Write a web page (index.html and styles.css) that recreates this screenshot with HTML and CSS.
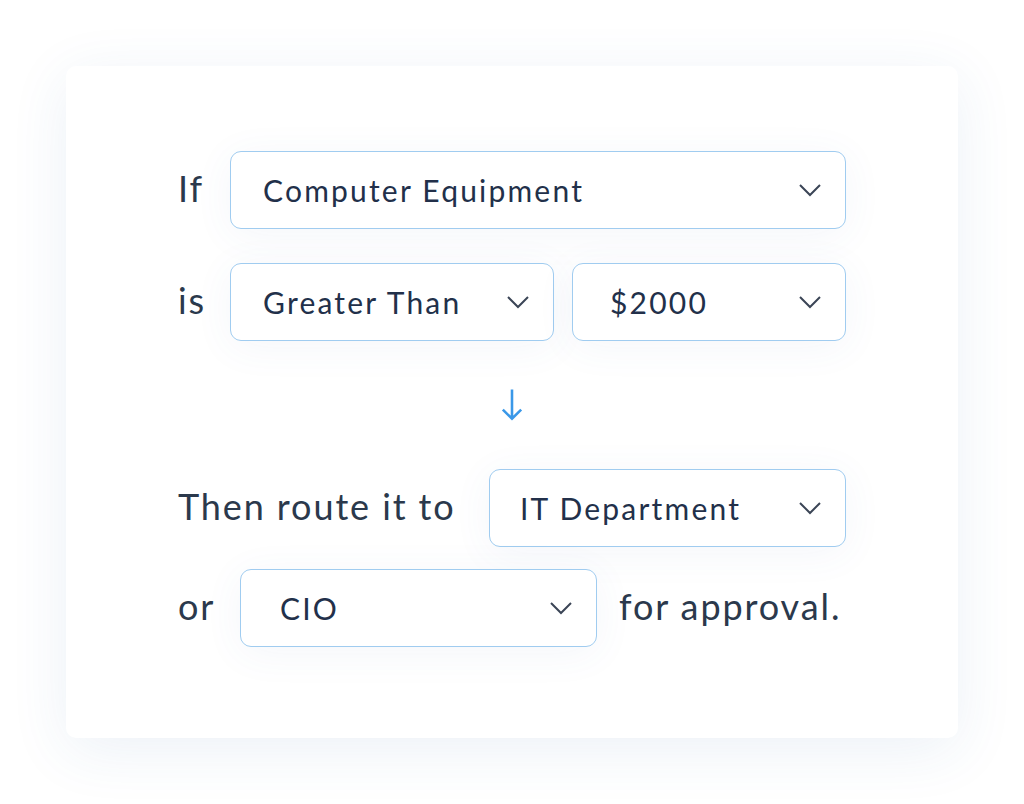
FILE: index.html
```html
<!DOCTYPE html>
<html lang="en">
<head>
    <meta charset="UTF-8">
    <meta name="viewport" content="width=device-width, initial-scale=1.0">
    <title>Approval Rule</title>
    <link rel="stylesheet" href="styles.css">
</head>
<body>
<main class="page">
    <div class="card">
        <div class="rule-row">
            <span class="label label-short">If</span>
            <div class="select select-wide">
                <span class="select-text">Computer Equipment</span>
                <svg class="chevron" viewBox="0 0 24 14"><path d="M2 2 L12 12 L22 2"/></svg>
            </div>
        </div>
        <div class="rule-row rule-row-second">
            <span class="label label-short">is</span>
            <div class="select select-compare">
                <span class="select-text">Greater Than</span>
                <svg class="chevron" viewBox="0 0 24 14"><path d="M2 2 L12 12 L22 2"/></svg>
            </div>
            <div class="select select-amount">
                <span class="select-text">$2000</span>
                <svg class="chevron" viewBox="0 0 24 14"><path d="M2 2 L12 12 L22 2"/></svg>
            </div>
        </div>
        <div class="arrow">
            <svg viewBox="0 0 24 36"><path d="M12 1 V33 M2 23 L12 33 L22 23"/></svg>
        </div>
        <div class="rule-row rule-row-split">
            <span class="label">Then route it to</span>
            <div class="select select-route">
                <span class="select-text">IT Department</span>
                <svg class="chevron" viewBox="0 0 24 14"><path d="M2 2 L12 12 L22 2"/></svg>
            </div>
        </div>
        <div class="rule-row rule-row-last">
            <span class="label label-or">or</span>
            <div class="select select-route select-cio">
                <span class="select-text">CIO</span>
                <svg class="chevron" viewBox="0 0 24 14"><path d="M2 2 L12 12 L22 2"/></svg>
            </div>
            <span class="label label-end">for approval.</span>
        </div>
    </div>
</main>
</body>
</html>
```

FILE: styles.css
```css
body, html {
    margin: 0;
    padding: 0;
    background-color: #fff;
    font-family: Lato, "Open Sans", sans-serif;
}

.page {
    padding: 66px 66px 0 66px;
    height: 804px;
    box-sizing: border-box;
}

.card {
    width: 892px;
    height: 672px;
    box-sizing: border-box;
    padding: 85px 112px 0 112px;
    background-color: #fff;
    border-radius: 10px;
    box-shadow: 0 12px 60px rgba(40, 100, 170, 0.09);
}

.rule-row {
    display: flex;
    align-items: center;
    gap: 18px;
}

.rule-row-second {
    margin-top: 34px;
}

.rule-row-split {
    justify-content: space-between;
    gap: 0;
}

.rule-row-last {
    margin-top: 22px;
    gap: 0;
}

.label {
    color: #2b394c;
    font-size: 36px;
    letter-spacing: 1.9px;
    white-space: nowrap;
    margin-top: -4px;
}

.label-short {
    width: 52px;
    flex: none;
}

.rule-row .label-short + .select {
    margin-left: -18px;
}

.label-or {
    width: 62px;
    flex: none;
}

.label-end {
    margin-left: 22px;
}

.select {
    height: 78px;
    box-sizing: border-box;
    border: 1.5px solid #a0ccf0;
    border-radius: 11px;
    background-color: #fff;
    display: flex;
    align-items: center;
    justify-content: space-between;
    padding: 0 23px 0 32px;
    box-shadow: 0 6px 40px rgba(60, 110, 170, 0.06);
}

.select-wide {
    flex: 1;
}

.select-compare {
    width: 324px;
}

.select-amount {
    flex: 1;
    padding-left: 37px;
}

.select-route {
    width: 357px;
    flex: none;
    padding-left: 30px;
}

.select-cio {
    padding-left: 39px;
}

.select-text {
    color: #22304a;
    font-size: 30px;
    letter-spacing: 2.2px;
    white-space: nowrap;
}

.chevron {
    width: 24px;
    height: 14px;
    flex: none;
}

.chevron path {
    fill: none;
    stroke: #3b4556;
    stroke-width: 2;
}

.arrow {
    height: 128px;
    display: flex;
    justify-content: center;
    align-items: center;
}

.arrow svg {
    width: 22px;
    height: 36px;
}

.arrow path {
    fill: none;
    stroke: #3a98e8;
    stroke-width: 2.8;
}
```
